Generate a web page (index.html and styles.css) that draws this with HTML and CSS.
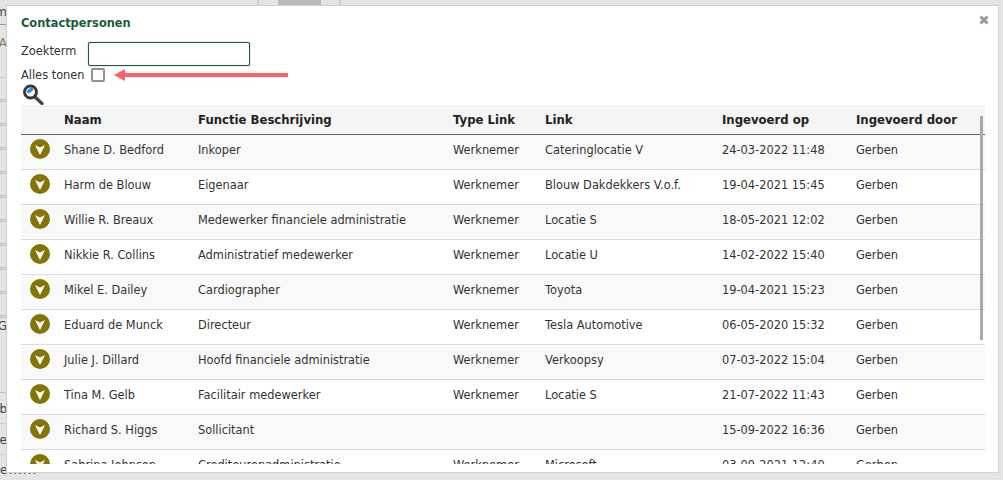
FILE: index.html
```html
<!DOCTYPE html>
<html lang="en">

<head>
    <meta charset="UTF-8">
    <title>Contactpersonen</title>
    <link rel="stylesheet" href="styles.css">
</head>

<body>
    <!-- page behind the dialog, only its edges stick out -->
    <div class="page">
        <div class="topbar">
            <span class="tab"><span class="tab-active"></span></span>
        </div>
        <div class="side">
            <div class="side-row head">m</div>
            <div class="side-row first">A</div>
            <div class="side-row double"></div>
            <div class="side-row double"></div>
            <div class="side-row double"></div>
            <div class="side-row double"></div>
            <div class="side-row double"></div>
            <div class="side-row double"></div>
            <div class="side-row double"></div>
            <div class="side-row double"></div>
            <div class="side-row double"></div>
            <div class="side-row double"></div>
            <div class="side-row big">G</div>
            <div class="side-row mid">b</div>
            <div class="side-row mid">e</div>
            <div class="side-row last">e......</div>
        </div>
    </div>

    <div class="modal">
        <button type="button" class="close" aria-label="Sluiten">
            <svg width="10" height="10" viewBox="0 0 10 10">
                <path d="M1.5 1.5 L8.5 8.5 M8.5 1.5 L1.5 8.5" stroke="#999" stroke-width="3"/>
            </svg>
        </button>
        <h1>Contactpersonen</h1>
        <div class="filter-row">
            <label for="zoekterm">Zoekterm</label>
            <input type="text" id="zoekterm">
        </div>
        <div class="filter-row check-row">
            <label for="allesTonen">Alles tonen</label>
            <span class="checkbox" id="allesTonen"></span>
            <svg class="arrow" width="174" height="12" viewBox="0 0 174 12">
                <path d="M0 6 L11 0 V4 H174 V8 H11 V12 Z" fill="#ff5f67"/>
            </svg>
        </div>
        <svg class="search-icon" width="21" height="21" viewBox="0 0 21 21">
            <path d="M12.5 13.5 L19 19.5" stroke="#444" stroke-width="3.2" stroke-linecap="round"/>
            <circle cx="7.5" cy="8" r="6" fill="#fff" stroke="#3a3a3a" stroke-width="3"/>
            <ellipse cx="7" cy="6.5" rx="3.6" ry="1.9" transform="rotate(-35 7 6.5)" fill="#1e90ea"/>
        </svg>
        <div class="table-wrap">
            <table>
                <thead>
                    <tr>
                        <th class="col-btn"></th>
                        <th class="col-naam">Naam</th>
                        <th class="col-functie">Functie Beschrijving</th>
                        <th class="col-type">Type Link</th>
                        <th class="col-link">Link</th>
                        <th class="col-datum">Ingevoerd op</th>
                        <th>Ingevoerd door</th>
                    </tr>
                </thead>
                <tbody id="rows"></tbody>
            </table>
            <div class="scrollbar"></div>
        </div>
    </div>

    <script>
        const people = [
            ['Shane D. Bedford', 'Inkoper', 'Werknemer', 'Cateringlocatie V', '24-03-2022 11:48'],
            ['Harm de Blouw', 'Eigenaar', 'Werknemer', 'Blouw Dakdekkers V.o.f.', '19-04-2021 15:45'],
            ['Willie R. Breaux', 'Medewerker financiele administratie', 'Werknemer', 'Locatie S', '18-05-2021 12:02'],
            ['Nikkie R. Collins', 'Administratief medewerker', 'Werknemer', 'Locatie U', '14-02-2022 15:40'],
            ['Mikel E. Dailey', 'Cardiographer', 'Werknemer', 'Toyota', '19-04-2021 15:23'],
            ['Eduard de Munck', 'Directeur', 'Werknemer', 'Tesla Automotive', '06-05-2020 15:32'],
            ['Julie J. Dillard', 'Hoofd financiele administratie', 'Werknemer', 'Verkoopsy', '07-03-2022 15:04'],
            ['Tina M. Gelb', 'Facilitair medewerker', 'Werknemer', 'Locatie S', '21-07-2022 11:43'],
            ['Richard S. Higgs', 'Sollicitant', '', '', '15-09-2022 16:36'],
            ['Sabrina Johnson', 'Crediteurenadministratie', 'Werknemer', 'Microsoft', '03-09-2021 12:40']
        ];

        const arrowIcon = `<svg width="20" height="20" viewBox="0 0 20 20">
            <circle cx="10" cy="10" r="10" fill="#847305"/>
            <path d="M5 6 L10 8.5 L15 6 L10 16 Z" fill="#fff"/>
        </svg>`;

        document.getElementById('rows').innerHTML = people.map(p => `
            <tr>
                <td class="col-btn">${arrowIcon}</td>
                <td>${p[0]}</td>
                <td>${p[1]}</td>
                <td>${p[2]}</td>
                <td>${p[3]}</td>
                <td>${p[4]}</td>
                <td>Gerben</td>
            </tr>`).join('');
    </script>
</body>

</html>
```
FILE: styles.css
```css
html,
body {
    margin: 0;
    height: 100%;
    overflow: hidden;
}

body {
    font-family: "DejaVu Sans", Verdana, sans-serif;
    font-size: 11.4px;
    color: #333;
    background-color: #e4e4e4;
}

.topbar {
    display: flex;
    height: 5px;
    padding-left: 257px;
}

.tab {
    display: flex;
    justify-content: center;
    width: 80px;
    border-left: 2px solid #cfcfcf;
    border-right: 2px solid #cfcfcf;
}

.tab-active {
    width: 43px;
    background-color: #b9b9b9;
}

.side {
    width: 7px;
    color: #444;
    font-size: 12px;
}

.side-row {
    box-sizing: border-box;
    display: flex;
    justify-content: flex-end;
    align-items: flex-start;
    white-space: nowrap;
    border-bottom: 1px solid #bdbdbd;
}

.side-row.head {
    height: 20px;
    border-bottom-color: #999;
}

.side-row.first {
    height: 53px;
    padding-top: 11px;
    border-bottom-color: #ccc;
    color: #8a7a55;
}

.side-row.double {
    height: 24px;
    border-bottom: 3px double #bdbdbd;
}

.side-row.big {
    height: 75px;
    padding-top: 1px;
}

.side-row.mid {
    height: 31px;
    padding-top: 9px;
    border-bottom-color: #ccc;
}

.side-row.last {
    justify-content: flex-start;
    height: 25px;
    padding-top: 8px;
    border-bottom: none;
    letter-spacing: 1px;
}

.modal {
    position: absolute;
    top: 5px;
    left: 6px;
    right: 4px;
    bottom: 7px;
    box-sizing: border-box;
    padding: 11px 13px 8px 14px;
    background-color: white;
    border: 1px solid #d0d0d0;
    display: flex;
    flex-direction: column;
}

h1 {
    margin: 0 0 12px 0;
    font-size: 11.4px;
    line-height: 13px;
    font-weight: bold;
    color: #1a5c38;
}

.close {
    position: absolute;
    top: 9px;
    right: 9px;
    padding: 0;
    border: none;
    background: none;
    line-height: 0;
}

.filter-row {
    display: flex;
    align-items: center;
    height: 24px;
}

.filter-row label {
    width: 67px;
    flex-shrink: 0;
    padding-bottom: 6px;
}

.filter-row input {
    width: 162px;
    height: 24px;
    box-sizing: border-box;
    border: 1px solid #1a5c38;
    border-radius: 2px;
    background-color: white;
    box-shadow: 0 0 1px #1a5c38;
}

.check-row {
    height: 18px;
}

.check-row label {
    width: 70px;
    padding-bottom: 0;
}

.checkbox {
    width: 10px;
    height: 10px;
    border: 2px solid #8f8f9d;
    border-radius: 2px;
}

.arrow {
    margin-left: 9px;
}

.search-icon {
    margin-left: 2px;
    flex-shrink: 0;
}

.table-wrap {
    position: relative;
    flex: 1;
    min-height: 0;
    overflow: hidden;
}

table {
    width: 100%;
    border-collapse: collapse;
    table-layout: fixed;
}

th {
    height: 29px;
    padding: 0;
    text-align: left;
    font-size: 11.7px;
    font-weight: bold;
    color: #222;
    background-color: #f5f5f5;
    border-bottom: 1px solid #666;
}

td {
    height: 35px;
    padding: 0 0 4px 0;
    box-sizing: border-box;
    border-bottom: 1px solid #ddd;
}

tbody tr:nth-child(odd) {
    background-color: #f9f9f9;
}

.col-btn {
    width: 43px;
}

td.col-btn {
    padding-left: 9px;
    padding-bottom: 7px;
    line-height: 0;
}

.col-naam {
    width: 134px;
}

.col-functie {
    width: 255px;
}

.col-type {
    width: 92px;
}

.col-link {
    width: 177px;
}

.col-datum {
    width: 134px;
}

.scrollbar {
    position: absolute;
    top: 11px;
    right: 2px;
    width: 3px;
    height: 224px;
    background-color: #aaa;
}
```
